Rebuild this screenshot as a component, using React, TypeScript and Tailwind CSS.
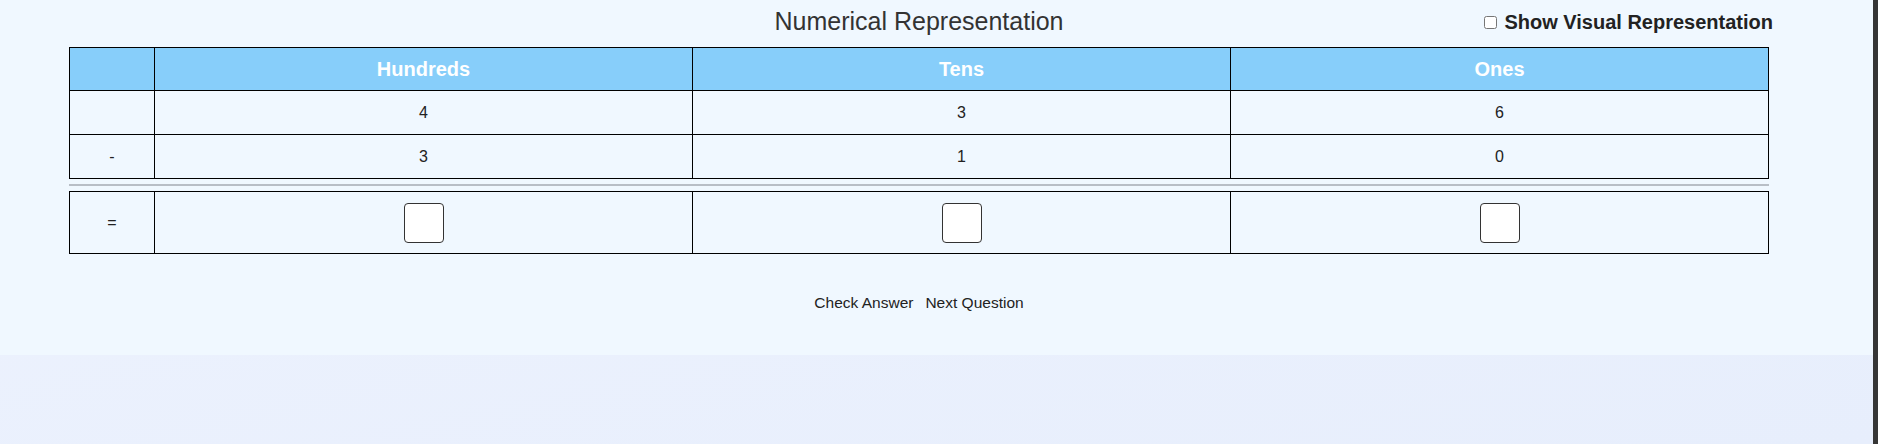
import { useState } from 'react'

const columns = ['Hundreds', 'Tens', 'Ones']
const top = [4, 3, 6]
const bottom = [3, 1, 0]

export default function App() {
  const [showVisual, setShowVisual] = useState(false)
  const [answers, setAnswers] = useState(['', '', ''])

  const setAnswer = (i: number, v: string) => {
    const next = [...answers]
    next[i] = v
    setAnswers(next)
  }

  return (
    <div className="flex h-[444px] w-full font-['Liberation_Sans',Arial,sans-serif] text-[#222]">
      <div className="flex flex-1 flex-col bg-linear-to-br from-[#eef3fe] to-[#e7eefc]">
        <div className="h-[355px] bg-[#f0f8ff] pl-[69px]">
          <div className="w-[1700px]">
            {/* titel + toggle */}
            <div className="grid h-[47px] grid-cols-[1fr_auto_1fr] items-start">
              <div />
              <h1 className="mt-[7px] text-[25px] leading-[29px] font-normal text-[#333]">
                Numerical Representation
              </h1>
              <label className="mt-[11px] mr-[-4px] flex items-center justify-self-end text-[20px] leading-[23px] font-bold">
                <input
                  type="checkbox"
                  checked={showVisual}
                  onChange={(e) => setShowVisual(e.target.checked)}
                  className="mr-[7px] h-[13px] w-[13px]"
                />
                Show Visual Representation
              </label>
            </div>

            <table className="w-full table-fixed border-collapse border border-black text-[16px]">
              <colgroup>
                <col className="w-[85px]" />
                <col />
                <col />
                <col />
              </colgroup>
              <thead>
                <tr className="h-[43px] bg-[#87cefa]">
                  <th className="border border-black" />
                  {columns.map((c) => (
                    <th key={c} className="border border-black text-[20px] font-bold text-white">
                      {c}
                    </th>
                  ))}
                </tr>
              </thead>
              <tbody>
                <tr className="h-[44px]">
                  <td className="border border-black text-center" />
                  {top.map((n, i) => (
                    <td key={i} className="border border-black text-center">
                      {n}
                    </td>
                  ))}
                </tr>
                <tr className="h-[44px]">
                  <td className="border border-black text-center">-</td>
                  {bottom.map((n, i) => (
                    <td key={i} className="border border-black text-center">
                      {n}
                    </td>
                  ))}
                </tr>
              </tbody>
            </table>

            <div className="mt-[5px] mb-[5px] h-[2px] bg-[#b8bec6]" />

            <table className="w-full table-fixed border-collapse border border-black text-[16px]">
              <colgroup>
                <col className="w-[85px]" />
                <col />
                <col />
                <col />
              </colgroup>
              <tbody>
                <tr className="h-[62px]">
                  <td className="border border-black text-center">=</td>
                  {answers.map((a, i) => (
                    <td key={i} className="border border-black text-center">
                      <input
                        type="text"
                        value={a}
                        onChange={(e) => setAnswer(i, e.target.value)}
                        className="h-[40px] w-[40px] rounded-[4px] border border-[#333] bg-white text-center align-middle text-[16px] outline-none"
                      />
                    </td>
                  ))}
                </tr>
              </tbody>
            </table>

            <div className="mt-[39px] flex justify-center gap-[12px] text-[15.5px] leading-[20px]">
              <button type="button" className="cursor-pointer">
                Check Answer
              </button>
              <button type="button" className="cursor-pointer">
                Next Question
              </button>
            </div>
          </div>
        </div>
      </div>
      <div className="w-[5px] bg-[#363636]" />
    </div>
  )
}
